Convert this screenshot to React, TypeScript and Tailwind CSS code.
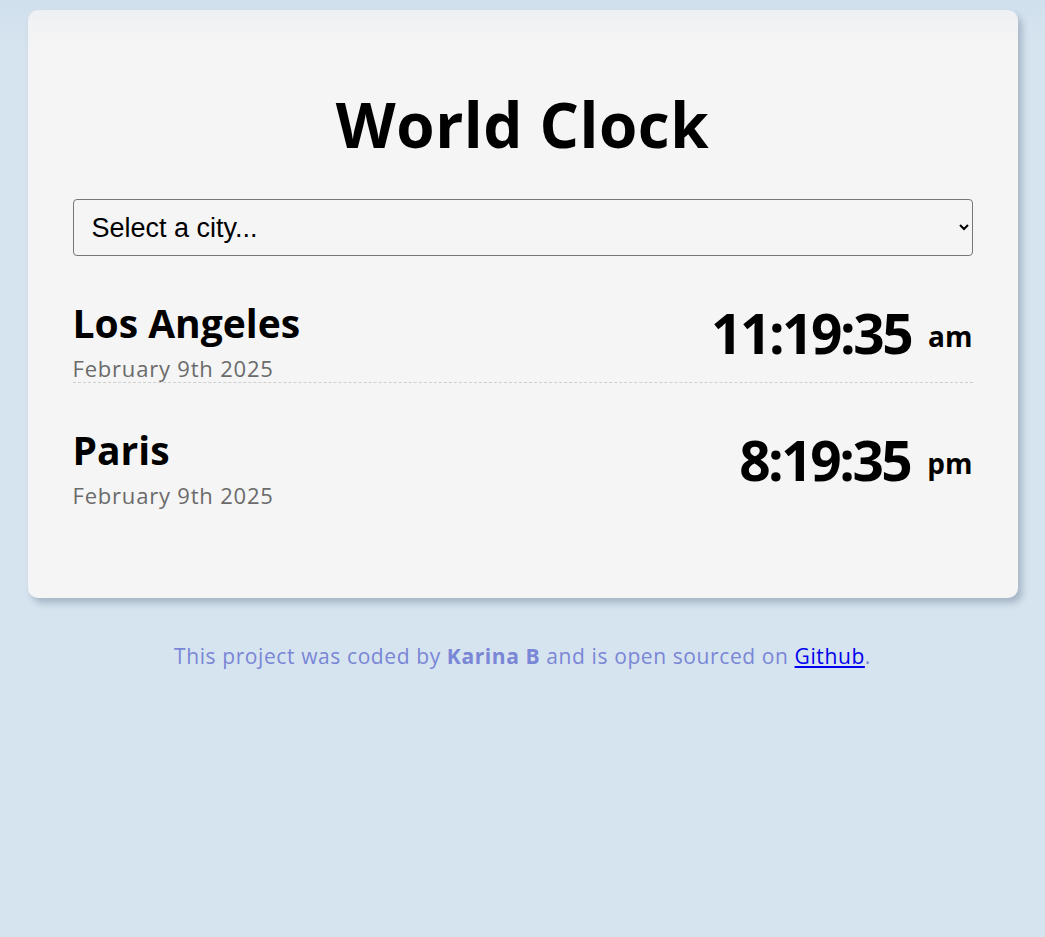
import { useState } from 'react';

const CITIES = [
  { name: 'Los Angeles', date: 'February 9th 2025', time: '11:19:35', period: 'am' },
  { name: 'Paris', date: 'February 9th 2025', time: '8:19:35', period: 'pm' },
];

const FONT = "font-['Open_Sans',sans-serif]";

export default function App() {
  const [city, setCity] = useState('');

  return (
    <div className={`relative min-h-screen bg-[#d6e4ef] pt-[10px] ${FONT}`}>
      <div className="pointer-events-none absolute inset-x-0 top-0 h-[46px] bg-gradient-to-b from-[rgba(170,190,225,0.12)] to-transparent" />
      <div className="mx-auto w-[990px] rounded-[10px] bg-[#f5f5f5] px-[45px] pb-[89px] pt-[79px] shadow-[4px_5px_7px_rgba(40,60,90,0.28)]">
        <h1 className="text-center text-[62px] font-bold leading-[70px] tracking-[0.5px] text-black">
          World Clock
        </h1>

        <select
          value={city}
          onChange={(e) => setCity(e.target.value)}
          className="mt-[40px] block h-[57px] w-full rounded-[4px] border border-[#767676] bg-[#f5f5f5] pl-[14px] pr-[10px] font-['Liberation_Sans',Arial,sans-serif] text-[27px] text-black"
        >
          <option value="">Select a city...</option>
          <option value="tokyo">Tokyo</option>
          <option value="sydney">Sydney</option>
        </select>

        <div className="mt-[43px]">
          {CITIES.map((c, i) => (
            <div
              key={c.name}
              className={`flex items-start justify-between ${
                i === 0 ? 'border-b border-dashed border-[#cfcfcf]' : 'pt-[43px]'
              }`}
            >
              <div>
                <div className="text-[39px] font-bold leading-[48px] text-black">{c.name}</div>
                <div className="mt-[7px] text-[22px] leading-[28px] tracking-[0.8px] text-[#6b6b6b]">
                  {c.date}
                </div>
              </div>
              <div className="flex items-start text-black">
                <span className="text-[55px] font-bold leading-[67px] tracking-[-2.5px]">{c.time}</span>
                <span className="ml-[17px] mt-[23px] text-[28px] font-bold leading-none">{c.period}</span>
              </div>
            </div>
          ))}
        </div>
      </div>

      <p className="mt-[44px] text-center text-[21px] leading-[28px] tracking-[0.6px] text-[#7a86d6]">
        This project was coded by <strong className="font-bold">Karina B</strong> and is open sourced on{' '}
        <a href="#" className="text-[#0000ee] underline">
          Github
        </a>
        .
      </p>
    </div>
  );
}
